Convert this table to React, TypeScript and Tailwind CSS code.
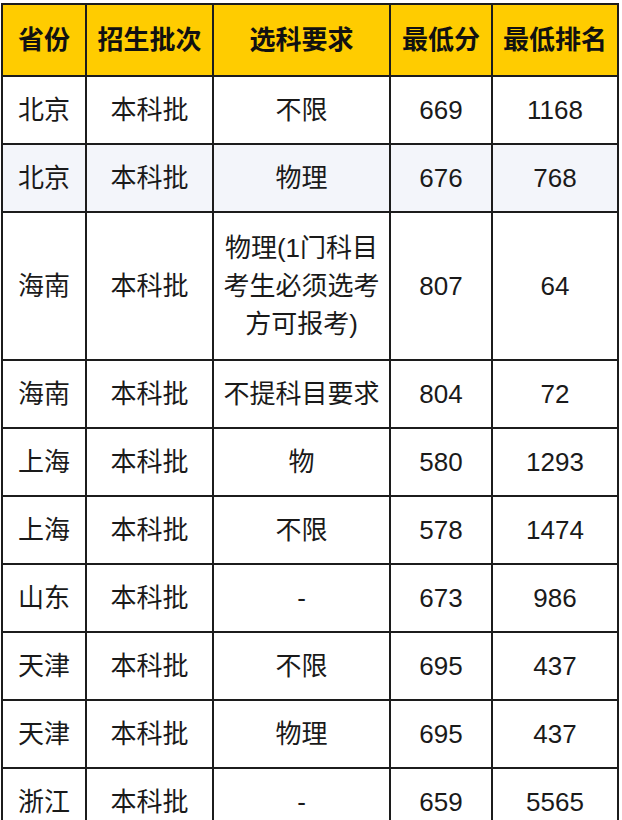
import React from "react";

const header = ["省份", "招生批次", "选科要求", "最低分", "最低排名"];

type Row = { cells: string[]; tall?: boolean; shaded?: boolean };

const rows: Row[] = [
  { cells: ["北京", "本科批", "不限", "669", "1168"] },
  { cells: ["北京", "本科批", "物理", "676", "768"], shaded: true },
  { cells: ["海南", "本科批", "物理(1门科目考生必须选考方可报考)", "807", "64"], tall: true },
  { cells: ["海南", "本科批", "不提科目要求", "804", "72"] },
  { cells: ["上海", "本科批", "物", "580", "1293"] },
  { cells: ["上海", "本科批", "不限", "578", "1474"] },
  { cells: ["山东", "本科批", "-", "673", "986"] },
  { cells: ["天津", "本科批", "不限", "695", "437"] },
  { cells: ["天津", "本科批", "物理", "695", "437"] },
  { cells: ["浙江", "本科批", "-", "659", "5565"] },
];

export default function App() {
  return (
    <div
      className="w-[622px] h-[820px] overflow-hidden bg-white pl-[1px] pt-[3px]"
      style={{ fontFamily: '"Liberation Sans", "Noto Sans CJK SC", sans-serif' }}
    >
      <div className="grid w-[618px] grid-cols-[82px_125px_175px_100px_124px] gap-[2px] bg-[#1c1c1c] p-[2px]">
        {header.map((h) => (
          <div
            key={h}
            className="flex h-[70px] items-center justify-center bg-[#ffcc00] text-[26px] font-bold text-[#111]"
          >
            {h}
          </div>
        ))}
        {rows.map((r, i) =>
          r.cells.map((c, j) => (
            <div
              key={`${i}-${j}`}
              className={`flex items-center justify-center px-[8px] text-center text-[26px] leading-[38px] text-[#1a1a1a] ${
                r.tall ? "h-[146px]" : "h-[66px]"
              } ${r.shaded ? "bg-[#f3f5fa]" : "bg-white"}`}
            >
              {c}
            </div>
          ))
        )}
      </div>
    </div>
  );
}
